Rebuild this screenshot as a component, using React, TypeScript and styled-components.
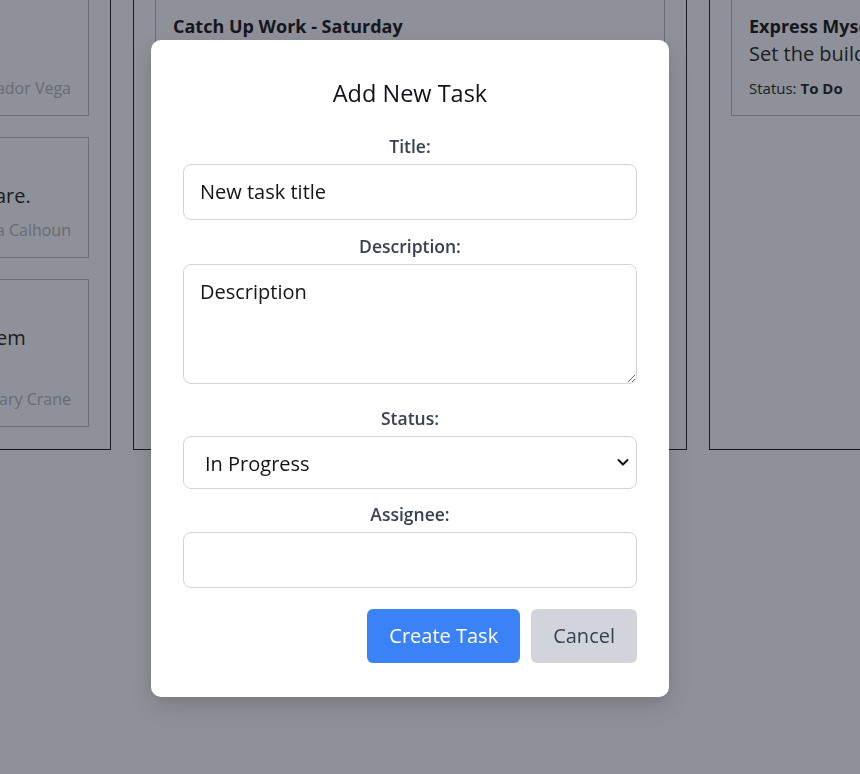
import React from "react";
import styled, { createGlobalStyle } from "styled-components";

const Global = createGlobalStyle`
  html, body {
    margin: 0;
    padding: 0;
    height: 100%;
    overflow: hidden;
    background: #8e9199;
  }
  body {
    font-family: "Open Sans", "Noto Sans", Arial, sans-serif;
  }
  * { box-sizing: border-box; }
`;

const Board = styled.div`
  display: flex;
  gap: 22px;
  margin-left: -443px;
  margin-top: -27px;
  width: max-content;
`;

const Column = styled.section`
  width: 554px;
  height: 477px;
  border: 1px solid #17191d;
  padding: 21px;
  display: flex;
  flex-direction: column;
  gap: 21px;
`;

const Card = styled.article`
  border: 1px solid #6a6e76;
  padding: 18px 17px 15px;
  display: flex;
  flex-direction: column;
`;

const CardTitle = styled.h3`
  margin: 0;
  font-size: 18px;
  line-height: 24px;
  font-weight: 700;
  color: #15171c;
  white-space: nowrap;
`;

const CardDesc = styled.p`
  margin: 2px 0 0;
  font-size: 20px;
  line-height: 27px;
  color: #1b1d21;
`;

const CardMeta = styled.div`
  margin-top: 9px;
  display: flex;
  justify-content: space-between;
  align-items: center;
  font-size: 15px;
  line-height: 24px;
  color: #1b1d21;
  white-space: nowrap;

  b { font-weight: 700; }
`;

const Assignee = styled.span`
  color: #676b73;
  font-size: 16px;
`;

const Backdrop = styled.div`
  position: fixed;
  inset: 0;
  display: flex;
  align-items: center;
  justify-content: center;
  padding: 0 40px 38px 0;
`;

const Modal = styled.form`
  width: 518px;
  background: #ffffff;
  border-radius: 10px;
  padding: 36px 32px 34px;
  box-shadow: 0 10px 25px rgba(0, 0, 0, 0.12), 0 4px 8px rgba(0, 0, 0, 0.06);
  display: flex;
  flex-direction: column;
`;

const ModalTitle = styled.h2`
  margin: 0 0 24px;
  text-align: center;
  font-size: 23.5px;
  line-height: 34px;
  font-weight: 500;
  color: #111318;
`;

const Field = styled.div<{ $gap?: number }>`
  display: flex;
  flex-direction: column;
  margin-bottom: ${(p) => p.$gap ?? 14}px;
`;

const Label = styled.label`
  text-align: center;
  font-size: 17.5px;
  line-height: 24px;
  font-weight: 600;
  color: #374151;
  margin-bottom: 6px;
`;

const inputBase = `
  width: 100%;
  border: 1px solid #d1d5db;
  border-radius: 8px;
  background: #fff;
  font-family: "Open Sans", "Noto Sans", Arial, sans-serif;
  font-size: 20px;
  line-height: 30px;
  color: #141414;
  padding: 12px 16px;
  outline: none;
`;

const TextInput = styled.input`
  ${inputBase}
  height: 56px;
`;

const TextArea = styled.textarea`
  ${inputBase}
  display: block;
  height: 120px;
  resize: vertical;
`;

const SelectWrap = styled.div`
  position: relative;
`;

const Select = styled.select`
  ${inputBase}
  height: 53px;
  appearance: none;
  padding-left: 21px;
`;

const Chevron = styled.svg`
  position: absolute;
  right: 7px;
  top: 50%;
  transform: translateY(-50%);
  pointer-events: none;
`;

const Actions = styled.div`
  display: flex;
  justify-content: flex-end;
  gap: 11px;
  margin-top: 7px;
`;

const Button = styled.button<{ $variant: "primary" | "secondary" }>`
  height: 54px;
  border: none;
  border-radius: 6px;
  padding: 0 22px;
  font-family: "Open Sans", "Noto Sans", Arial, sans-serif;
  font-size: 20px;
  line-height: 30px;
  cursor: pointer;
  background: ${(p) => (p.$variant === "primary" ? "#3b82f6" : "#d1d5db")};
  color: ${(p) => (p.$variant === "primary" ? "#ffffff" : "#374151")};
`;

type Task = {
  title: string;
  desc: string;
  status: string;
  assignee: string;
};

const columns: Task[][] = [
  [
    { title: "Plan Sprint Review", desc: "Book a room.", status: "Done", assignee: "Salvador Vega" },
    {
      title: "Update Documentation",
      desc: "Revise the onboarding guide for new software.",
      status: "Done",
      assignee: "Maria Calhoun",
    },
    {
      title: "Fix Login Bug",
      desc: "Investigate the session timeouts in the system before the next release.",
      status: "Done",
      assignee: "Gary Crane",
    },
  ],
  [
    {
      title: "Catch Up Work - Saturday",
      desc: "Finish the remaining reports from this week.",
      status: "In Progress",
      assignee: "Lena Brooks",
    },
  ],
  [
    {
      title: "Express Mysql Setup",
      desc: "Set the building blocks for the backend.",
      status: "To Do",
      assignee: "Tom Reyes",
    },
  ],
];

export default function App() {
  return (
    <>
      <Global />
      <Board>
        {columns.map((tasks, i) => (
          <Column key={i}>
            {tasks.map((t) => (
              <Card key={t.title}>
                <CardTitle>{t.title}</CardTitle>
                <CardDesc>{t.desc}</CardDesc>
                <CardMeta>
                  <span>
                    Status: <b>{t.status}</b>
                  </span>
                  <Assignee>{t.assignee}</Assignee>
                </CardMeta>
              </Card>
            ))}
          </Column>
        ))}
      </Board>
      <Backdrop>
        <Modal onSubmit={(e) => e.preventDefault()}>
          <ModalTitle>Add New Task</ModalTitle>
          <Field>
            <Label htmlFor="title">Title:</Label>
            <TextInput id="title" defaultValue="New task title" />
          </Field>
          <Field $gap={22}>
            <Label htmlFor="desc">Description:</Label>
            <TextArea id="desc" defaultValue="Description" />
          </Field>
          <Field $gap={13}>
            <Label htmlFor="status">Status:</Label>
            <SelectWrap>
              <Select id="status" defaultValue="In Progress">
                <option>To Do</option>
                <option>In Progress</option>
                <option>Done</option>
              </Select>
              <Chevron width="14" height="14" viewBox="0 0 14 14" fill="none">
                <path d="M2.5 5 L7 9.5 L11.5 5" stroke="#111" strokeWidth="2" strokeLinecap="round" strokeLinejoin="round" />
              </Chevron>
            </SelectWrap>
          </Field>
          <Field $gap={14}>
            <Label htmlFor="assignee">Assignee:</Label>
            <TextInput id="assignee" defaultValue="" />
          </Field>
          <Actions>
            <Button type="submit" $variant="primary">Create Task</Button>
            <Button type="button" $variant="secondary">Cancel</Button>
          </Actions>
        </Modal>
      </Backdrop>
    </>
  );
}
